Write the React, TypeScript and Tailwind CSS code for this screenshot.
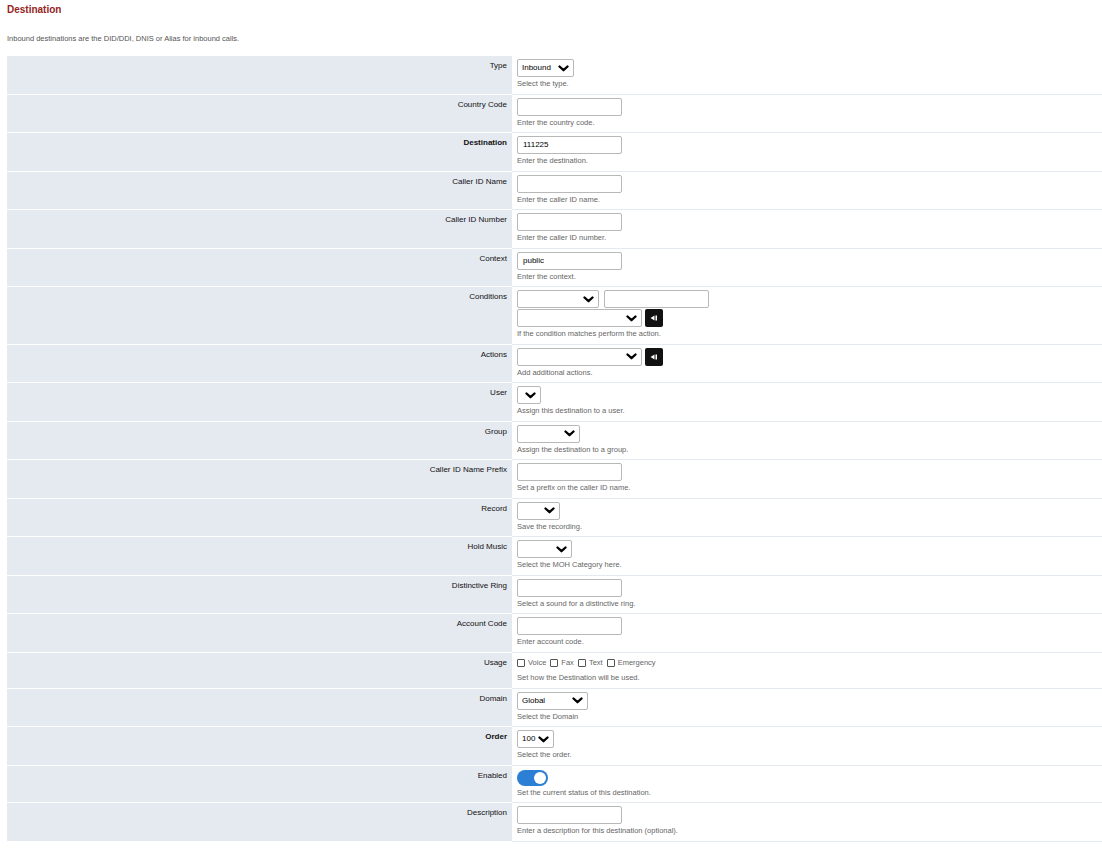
import React from "react";

const font = { fontFamily: '"Liberation Sans", Arial, sans-serif' };

function Chevron() {
  return (
    <svg width="11" height="7" viewBox="0 0 11 7" className="shrink-0">
      <polyline points="1.5,1.5 5.5,5.2 9.5,1.5" fill="none" stroke="#000" strokeWidth="2.3" strokeLinecap="round" strokeLinejoin="round" />
    </svg>
  );
}

function Select({ w, value }: { w: string; value?: string }) {
  return (
    <div className={`${w} h-[18px] flex items-center justify-between border border-[#b8b8b8] rounded-[2px] bg-white pl-[4px] pr-[4px] text-[8px] text-[#000]`}>
      <span>{value ?? ""}</span>
      <Chevron />
    </div>
  );
}

function Input({ w = "w-[105px]", value }: { w?: string; value?: string }) {
  return (
    <div className={`${w} h-[18px] flex items-center border border-[#b8b8b8] rounded-[2px] bg-white px-[5px] text-[8px] text-[#000]`}>
      {value ?? ""}
    </div>
  );
}

function AddButton() {
  return (
    <div className="w-[18px] h-[18px] rounded-[2px] bg-[#111] flex items-center justify-center">
      <svg width="8" height="6" viewBox="0 0 8 6">
        <polygon points="0.5,3 4.5,0.5 4.5,5.5" fill="#fff" />
        <rect x="5.5" y="0.5" width="1.5" height="5" fill="#fff" />
      </svg>
    </div>
  );
}

function Desc({ children, mt = "mt-[2px]" }: { children: React.ReactNode; mt?: string }) {
  return <div className={`${mt} text-[7.5px] leading-[10px] text-[#666]`}>{children}</div>;
}

function Row({ label, bold, children, pb = "pb-[4.5px]" }: { label: string; bold?: boolean; children: React.ReactNode; pb?: string }) {
  return (
    <div className="grid grid-cols-[505px_1fr]">
      <div className={`bg-[#e5e9f0] border-b border-white text-right pr-[5px] pt-[5px] text-[8px] leading-[10px] text-[#111] ${bold ? "font-bold" : ""}`}>
        {label}
      </div>
      <div className={`pl-[5px] pt-[3px] ${pb} border-b border-[#e5e9f0]`}>{children}</div>
    </div>
  );
}

function Check({ label }: { label: string }) {
  return (
    <span className="inline-flex items-center gap-[3px] mr-[4px]">
      <span className="w-[8px] h-[8px] border border-[#555] rounded-[1px] bg-white" />
      <span>{label}</span>
    </span>
  );
}

export default function App() {
  return (
    <div className="bg-white min-h-screen pl-[7px] pt-[4px]" style={font}>
      <div className="text-[10px] font-bold text-[#952424] leading-[12px]">Destination</div>
      <div className="mt-[18px] text-[7.5px] leading-[10px] text-[#555]">
        Inbound destinations are the DID/DDI, DNIS or Alias for inbound calls.
      </div>
      <div className="mt-[12px]">
        <Row label="Type">
          <Select w="w-[57px]" value="Inbound" />
          <Desc>Select the type.</Desc>
        </Row>
        <Row label="Country Code">
          <Input />
          <Desc>Enter the country code.</Desc>
        </Row>
        <Row label="Destination" bold>
          <Input value="111225" />
          <Desc>Enter the destination.</Desc>
        </Row>
        <Row label="Caller ID Name">
          <Input />
          <Desc>Enter the caller ID name.</Desc>
        </Row>
        <Row label="Caller ID Number">
          <Input />
          <Desc>Enter the caller ID number.</Desc>
        </Row>
        <Row label="Context">
          <Input value="public" />
          <Desc>Enter the context.</Desc>
        </Row>
        <Row label="Conditions">
          <div className="flex gap-[5px]">
            <Select w="w-[82px]" />
            <Input w="w-[105px]" />
          </div>
          <div className="flex items-center gap-[3px] mt-[1px]">
            <Select w="w-[125px]" />
            <AddButton />
          </div>
          <Desc>If the condition matches perform the action.</Desc>
        </Row>
        <Row label="Actions">
          <div className="flex items-center gap-[3px]">
            <Select w="w-[125px]" />
            <AddButton />
          </div>
          <Desc>Add additional actions.</Desc>
        </Row>
        <Row label="User">
          <Select w="w-[24px]" />
          <Desc>Assign this destination to a user.</Desc>
        </Row>
        <Row label="Group">
          <Select w="w-[63px]" />
          <Desc>Assign the destination to a group.</Desc>
        </Row>
        <Row label="Caller ID Name Prefix">
          <Input />
          <Desc>Set a prefix on the caller ID name.</Desc>
        </Row>
        <Row label="Record">
          <Select w="w-[43px]" />
          <Desc>Save the recording.</Desc>
        </Row>
        <Row label="Hold Music">
          <Select w="w-[55px]" />
          <Desc>Select the MOH Category here.</Desc>
        </Row>
        <Row label="Distinctive Ring">
          <Input />
          <Desc>Select a sound for a distinctive ring.</Desc>
        </Row>
        <Row label="Account Code">
          <Input />
          <Desc>Enter account code.</Desc>
        </Row>
        <Row label="Usage" pb="pb-[5px]">
          <div className="flex items-center h-[14px] text-[7.5px] text-[#666]">
            <Check label="Voice" />
            <Check label="Fax" />
            <Check label="Text" />
            <Check label="Emergency" />
          </div>
          <Desc mt="mt-[3px]">Set how the Destination will be used.</Desc>
        </Row>
        <Row label="Domain">
          <Select w="w-[71px]" value="Global" />
          <Desc>Select the Domain</Desc>
        </Row>
        <Row label="Order" bold>
          <Select w="w-[37px]" value="100" />
          <Desc>Select the order.</Desc>
        </Row>
        <Row label="Enabled" pb="pb-[4px]">
          <div className="w-[31px] h-[16px] rounded-full bg-[#2b7fd4] flex items-center justify-end pr-[2px] mt-[1px]">
            <span className="w-[12px] h-[12px] rounded-full bg-white" />
          </div>
          <Desc>Set the current status of this destination.</Desc>
        </Row>
        <Row label="Description" pb="pb-[5px]">
          <Input />
          <Desc>Enter a description for this destination (optional).</Desc>
        </Row>
      </div>
    </div>
  );
}
